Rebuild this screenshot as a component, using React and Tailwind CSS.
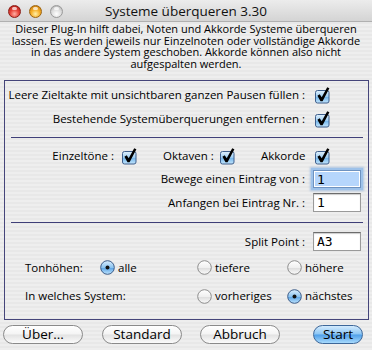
import React, { useId } from 'react';

const ui = "font-['Open_Sans','Liberation_Sans',sans-serif]";

const Light = ({ color }) => {
  const tones = {
    red: 'bg-[radial-gradient(circle_at_50%_72%,#ffb0a4_0%,#e8453a_45%,#a8150f_100%)] border-[#8c1d16]',
    orange: 'bg-[radial-gradient(circle_at_50%_72%,#fff0a8_0%,#f6b02a_45%,#c06e00_100%)] border-[#9c6410]',
    gray: 'bg-[radial-gradient(circle_at_50%_72%,#ffffff_0%,#dcdcdc_50%,#a9a9a9_100%)] border-[#9a9a9a]',
  };
  return (
    <span className={`relative block w-[13px] h-[13px] rounded-full border ${tones[color]}`}>
      <span className="absolute left-[3px] top-[1px] w-[5px] h-[3px] rounded-full bg-white/70" />
    </span>
  );
};

const Checkbox = () => {
  const id = useId();
  return (
    <svg width="16" height="16" viewBox="0 0 16 16" className="block overflow-visible">
      <defs>
        <linearGradient id={id} x1="0" y1="0" x2="0" y2="1">
          <stop offset="0" stopColor="#e2f1fc" />
          <stop offset="0.5" stopColor="#9ccdf3" />
          <stop offset="0.55" stopColor="#78b8ec" />
          <stop offset="1" stopColor="#c4e6fc" />
        </linearGradient>
      </defs>
      <rect x="0.5" y="3.5" width="13.5" height="12.5" rx="2" fill={`url(#${id})`} stroke="#3f5f8c" />
      <polygon points="2.4,8.7 4.7,7.2 6.7,10.2 12.2,0.2 14.4,1.3 7.6,14.2 5.5,14.2" fill="#000" />
    </svg>
  );
};

const Radio = ({ on }) => {
  const id = useId();
  return (
    <svg width="15" height="15" viewBox="0 0 15 15" className="block">
      <defs>
        <linearGradient id={id} x1="0" y1="0" x2="0" y2="1">
          {on ? (
            <>
              <stop offset="0" stopColor="#dcefff" />
              <stop offset="0.5" stopColor="#8cc4f0" />
              <stop offset="0.55" stopColor="#5fa6e6" />
              <stop offset="1" stopColor="#bfe4fd" />
            </>
          ) : (
            <>
              <stop offset="0" stopColor="#ffffff" />
              <stop offset="0.5" stopColor="#f0f0f0" />
              <stop offset="0.55" stopColor="#dedede" />
              <stop offset="1" stopColor="#fbfbfb" />
            </>
          )}
        </linearGradient>
      </defs>
      <circle cx="7.5" cy="7.5" r="6.8" fill={`url(#${id})`} stroke={on ? '#3c5c88' : '#8d8d8d'} strokeWidth="1" />
      {on && <circle cx="7.5" cy="7.5" r="2" fill="#111" />}
    </svg>
  );
};

const Field = ({ value, focused }) =>
  focused ? (
    <div className="w-[48px] h-[18px] border border-[#6e92c0] bg-white p-px shadow-[0_0_0_2px_#9ec2ea,0_0_2px_3px_rgba(120,165,220,0.55)]">
      <div className="h-full bg-[#b6d6fc] pl-[2px] text-[13px] leading-[15px] font-['DejaVu_Sans_Mono',monospace]">{value}</div>
    </div>
  ) : (
    <div className="w-[48px] h-[19px] border border-[#9a9a9a] border-t-[#6c6c6c] bg-white shadow-[inset_0_1px_1px_rgba(0,0,0,0.2)] pl-[3px] text-[13px] leading-[17px] font-['DejaVu_Sans_Mono',monospace]">
      {value}
    </div>
  );

const Button = ({ children, primary, className = '' }) => (
  <button
    className={`h-[19px] rounded-full border text-[13.5px] leading-[17px] text-black ${
      primary
        ? 'border-[#3d6799] bg-[linear-gradient(to_bottom,#d3ebfd_0%,#8cc6f4_48%,#4f9fe8_52%,#a7dafd_100%)]'
        : 'border-[#8a8a8a] bg-[linear-gradient(to_bottom,#ffffff_0%,#f4f4f4_48%,#e2e2e2_52%,#fbfbfb_100%)]'
    } ${className}`}
  >
    {children}
  </button>
);

const Row = ({ h, label, children }) => (
  <div className={`flex items-center pr-[6px] ${h}`}>
    <div className="flex-1 text-right pr-[8px] whitespace-nowrap">{label}</div>
    <div className="w-[49px]">{children}</div>
  </div>
);

const Separator = () => (
  <div className="pt-[8px] pb-[7px] pl-[6px] pr-[5px]">
    <div className="h-px bg-[#3f3f78]" />
  </div>
);

const Choice = ({ on, label }) => (
  <div className="flex items-center gap-[3px]">
    <Radio on={on} />
    <span>{label}</span>
  </div>
);

export default function App() {
  return (
    <div className={`w-[372px] h-[350px] overflow-hidden flex flex-col text-black ${ui} bg-[repeating-linear-gradient(to_bottom,#eeeeee_0px,#eeeeee_2px,#e8e8e8_2px,#e8e8e8_4px)]`}>
      <div className="h-[22px] shrink-0 grid grid-cols-[1fr_auto_1fr] items-center border-b border-[#b0b0b0] bg-[linear-gradient(to_bottom,#ececec,#d4d4d4)]">
        <div className="flex gap-[8px] pl-[8px]">
          <Light color="red" />
          <Light color="orange" />
          <Light color="gray" />
        </div>
        <div className="text-[13.5px] leading-[22px] text-[#111]">Systeme überqueren 3.30</div>
        <div />
      </div>

      <p className="h-[58px] pt-px text-center text-[11px] leading-[11.7px]">
        Dieser Plug-In hilft dabei, Noten und Akkorde Systeme überqueren
        <br />
        lassen. Es werden jeweils nur Einzelnoten oder vollständige Akkorde
        <br />
        in das andere System geschoben. Akkorde können also nicht
        <br />
        aufgespalten werden.
      </p>

      <div className="ml-[4px] w-[365px] h-[240px] shrink-0 border border-[#45457a] text-[11.5px]">
        <Row h="h-[28px]" label="Leere Zieltakte mit unsichtbaren ganzen Pausen füllen :">
          <div className="pl-[2px]"><Checkbox /></div>
        </Row>
        <Row h="h-[20px]" label="Bestehende Systemüberquerungen entfernen :">
          <div className="pl-[2px]"><Checkbox /></div>
        </Row>

        <Separator />

        <div className="grid grid-cols-[158px_98px_52px_49px] h-[21px] items-center">
          <div className="flex justify-end items-center gap-[8px] pr-[25px]">
            <span>Einzeltöne :</span>
            <Checkbox />
          </div>
          <div className="flex items-center gap-[6px]">
            <span>Oktaven :</span>
            <Checkbox />
          </div>
          <div>Akkorde</div>
          <div className="pl-[2px]"><Checkbox /></div>
        </div>

        <Row h="h-[25px]" label="Bewege einen Eintrag von :">
          <Field value="1" focused />
        </Row>
        <Row h="h-[23px]" label="Anfangen bei Eintrag Nr.  :">
          <Field value="1" />
        </Row>

        <Separator />

        <Row h="h-[23px]" label="Split Point :">
          <Field value="A3" />
        </Row>

        <div className="grid grid-cols-[75px_97px_90px_1fr] pl-[20px] h-[29px] items-center">
          <div>Tonhöhen:</div>
          <Choice on label="alle" />
          <Choice label="tiefere" />
          <Choice label="höhere" />
        </div>
        <div className="grid grid-cols-[75px_97px_90px_1fr] pl-[20px] h-[28px] items-center">
          <div className="col-span-2">In welches System:</div>
          <Choice label="vorheriges" />
          <Choice on label="nächstes" />
        </div>
      </div>

      <div className="flex pt-[5px]">
        <Button className="ml-[3px] w-[80px]">Über...</Button>
        <Button className="ml-[19px] w-[80px]">Standard</Button>
        <Button className="ml-[18px] w-[80px]">Abbruch</Button>
        <Button primary className="ml-auto mr-[9px] w-[50px]">Start</Button>
      </div>
    </div>
  );
}
